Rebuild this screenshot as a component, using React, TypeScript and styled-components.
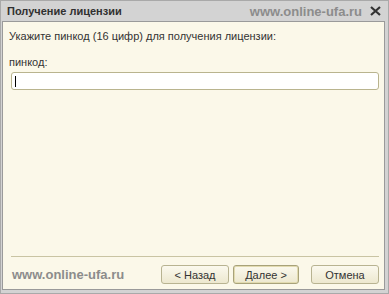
import styled, { createGlobalStyle } from 'styled-components';

const GlobalStyle = createGlobalStyle`
  html, body {
    margin: 0;
    padding: 0;
    background: #ffffff;
  }
  body {
    font-family: "Liberation Sans", Arial, sans-serif;
  }
`;

const Window = styled.div`
  width: 389px;
  height: 294px;
  box-sizing: border-box;
  display: flex;
  flex-direction: column;
  background: #d3d3d3;
  border: 1px solid #a9a9a9;
  padding: 0 3px 3px 1px;
`;

const TitleBar = styled.div`
  height: 20px;
  display: flex;
  align-items: center;
  padding: 0 4px 0 5px;
  flex-shrink: 0;
`;

const Title = styled.div`
  font-size: 11px;
  font-weight: bold;
  color: #303030;
  flex: 1;
`;

const Watermark = styled.div`
  font-size: 13px;
  font-weight: bold;
  color: #8c8c8c;
`;

const CloseButton = styled.div`
  width: 12px;
  height: 12px;
  margin-left: 7px;
  display: flex;
  align-items: center;
  justify-content: center;
`;

const Content = styled.div`
  flex: 1;
  display: flex;
  flex-direction: column;
  background: #fbf8e9;
  border: 1px solid #9a9a9a;
  padding: 8px 5px 5px 6px;
`;

const Text = styled.div<{ $top?: number }>`
  font-size: 11px;
  line-height: 13px;
  color: #333333;
  margin-top: ${p => p.$top || 0}px;
`;

const Input = styled.div`
  margin: 3px 0 0 2px;
  height: 16px;
  background: #ffffff;
  border: 1px solid #b9b48e;
  border-radius: 3px;
  display: flex;
  align-items: center;
  padding-left: 3px;
`;

const Caret = styled.div`
  width: 1px;
  height: 11px;
  background: #000000;
`;

const Spacer = styled.div`
  flex: 1;
`;

const Separator = styled.div`
  height: 1px;
  background: #c9c4a3;
  margin: 0 0 8px 2px;
`;

const Footer = styled.div`
  display: flex;
  align-items: center;
  padding-left: 3px;
`;

const Buttons = styled.div`
  margin-left: auto;
  display: flex;
  gap: 4px;
`;

const Button = styled.div<{ $primary?: boolean; $gap?: number; $width?: number }>`
  width: ${p => p.$width || 68}px;
  height: 19px;
  box-sizing: border-box;
  margin-left: ${p => p.$gap || 0}px;
  display: flex;
  align-items: center;
  justify-content: center;
  font-size: 11px;
  color: #333333;
  background: linear-gradient(#fbf9ee, #ede8cf);
  border: 1px solid ${p => (p.$primary ? '#a8a27a' : '#b8b391')};
  border-radius: 3px;
  box-shadow: ${p => (p.$primary ? 'inset 0 0 0 1px #e2dbb0' : 'none')};
`;

export default function App() {
  return (
    <>
      <GlobalStyle />
      <Window>
        <TitleBar>
          <Title>Получение лицензии</Title>
          <Watermark>www.online-ufa.ru</Watermark>
          <CloseButton>
            <svg width="11" height="10" viewBox="0 0 11 10">
              <path d="M1 1 L10 9 M10 1 L1 9" stroke="#333" strokeWidth="2.2" />
            </svg>
          </CloseButton>
        </TitleBar>
        <Content>
          <Text>Укажите пинкод (16 цифр) для получения лицензии:</Text>
          <Text $top={13}>пинкод:</Text>
          <Input>
            <Caret />
          </Input>
          <Spacer />
          <Separator />
          <Footer>
            <Watermark>www.online-ufa.ru</Watermark>
            <Buttons>
              <Button>&lt; Назад</Button>
              <Button $primary $width={66}>Далее &gt;</Button>
              <Button $gap={8}>Отмена</Button>
            </Buttons>
          </Footer>
        </Content>
      </Window>
    </>
  );
}
